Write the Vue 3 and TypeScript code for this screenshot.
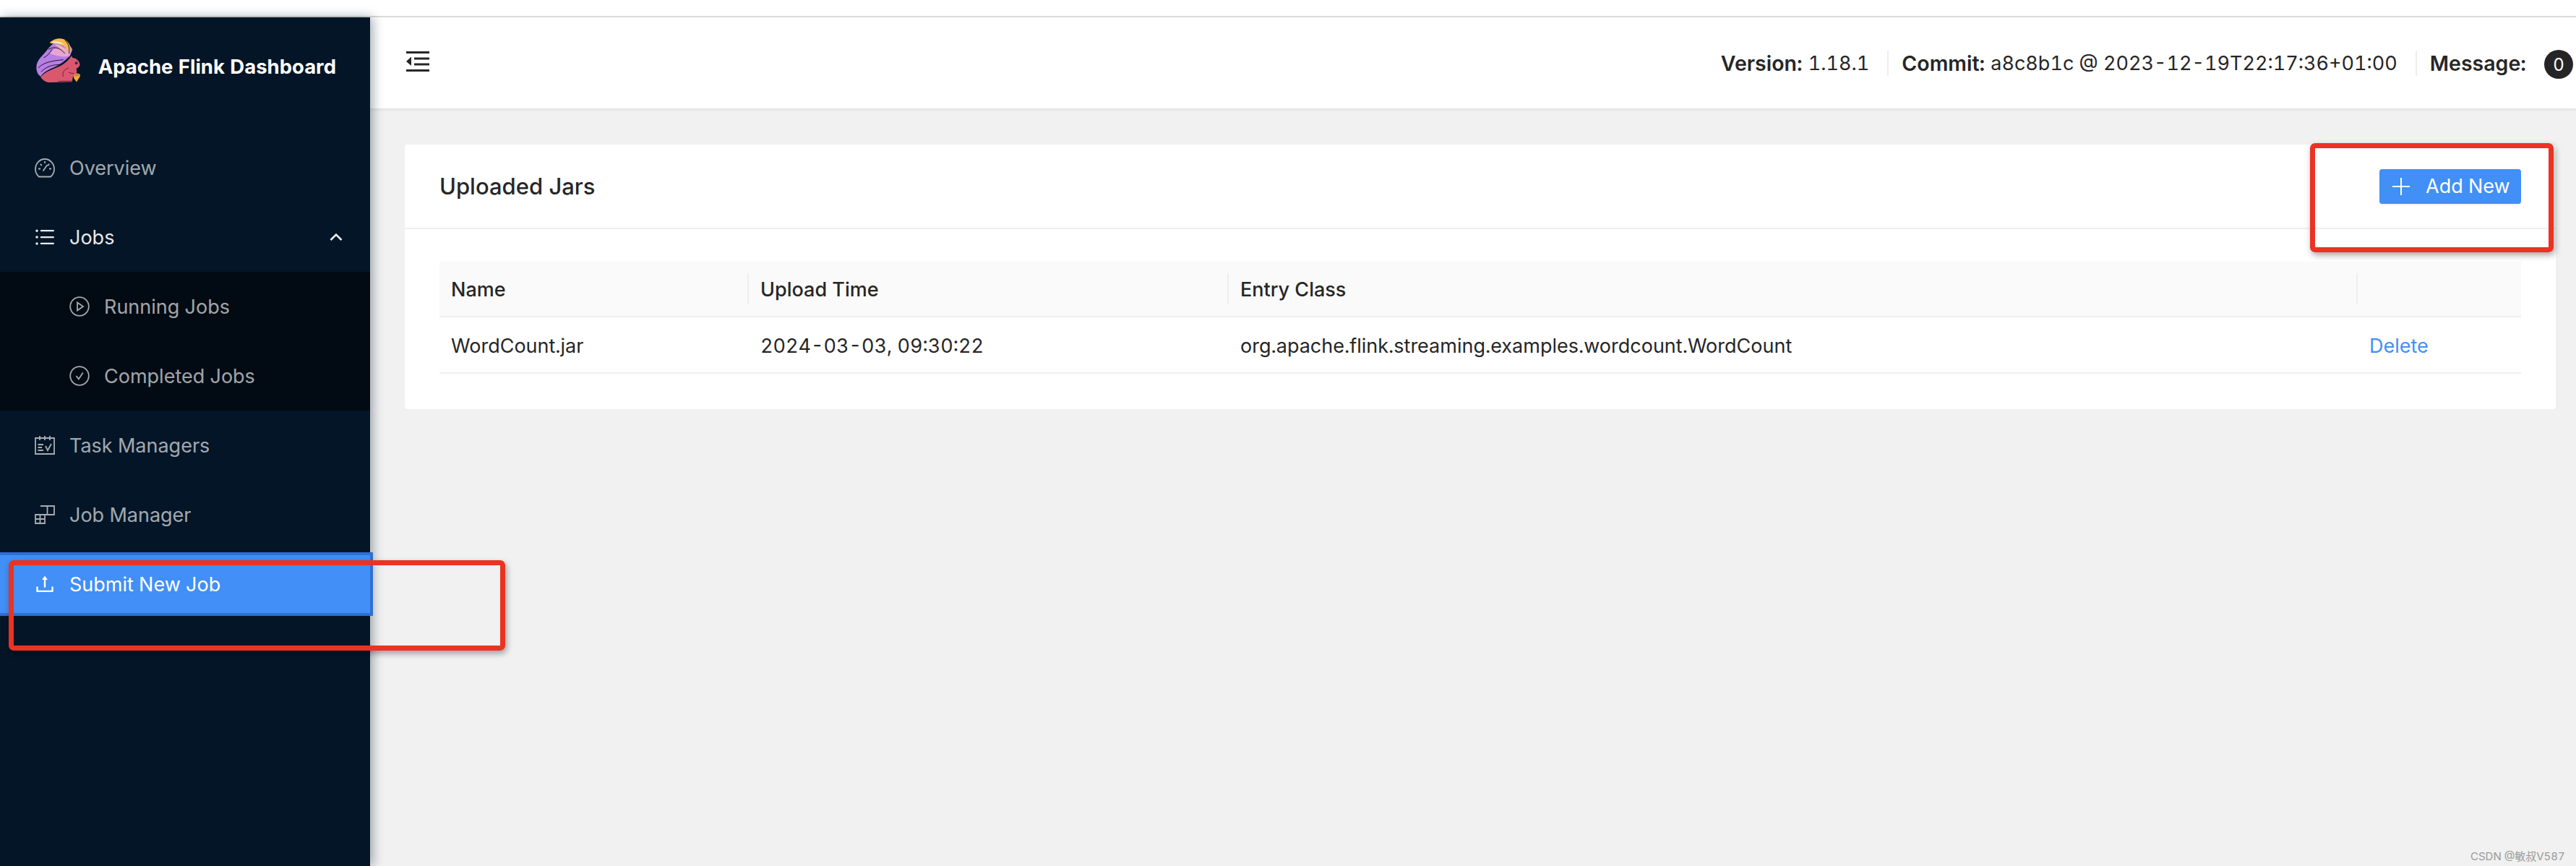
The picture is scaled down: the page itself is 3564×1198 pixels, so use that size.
<script setup lang="ts">
interface JarRow {
  name: string
  time: string
  entry: string
}

const jars: JarRow[] = [
  {
    name: 'WordCount.jar',
    time: '2024-03-03, 09:30:22',
    entry: 'org.apache.flink.streaming.examples.wordcount.WordCount'
  }
]
</script>

<template>
  <div class="page">
    <div class="top-strip"></div>
    <div class="layout">
      <aside class="sider">
        <div class="logo">
          <svg class="squirrel" viewBox="140 150 200 200">
            <path d="M150 280C150 245 180 230 200 200L225 175L290 190L300 205L290 232C270 250 250 270 210 285C190 295 175 305 168 318C155 310 150 295 150 280Z" fill="#b67fe2" />
            <path d="M205 222C225 195 255 190 280 205L296 208L286 232C262 240 235 232 205 222Z" fill="#e7a6cf" />
            <path d="M205 178C215 165 240 155 262 162C280 170 292 185 292 205L285 225C280 200 262 185 240 183C225 180 215 182 205 178Z" fill="#f7b84f" />
            <path d="M212 176C228 168 250 172 268 186C250 180 230 178 212 176Z" fill="#fdeec7" />
            <path d="M225 186C240 182 262 192 272 212C255 200 240 194 225 186Z" fill="#f3c19a" />
            <path d="M158 282C175 262 210 252 262 248M170 298C190 276 220 268 250 268M180 240C195 232 205 222 215 205M268 168C282 178 288 192 286 222M200 205C225 190 250 200 268 222" fill="none" stroke="#26102f" stroke-width="3" />
            <path d="M168 320C185 300 205 292 230 282C260 270 280 255 292 236L296 232L300 240C315 240 328 252 331 268C328 278 322 282 316 284C318 292 318 300 316 304L302 318L298 340L205 342C190 342 175 332 168 320Z" fill="#d95870" />
            <path d="M262 318C254 300 268 286 284 282M284 300C292 304 300 306 308 304M240 338C262 336 280 338 298 336" fill="none" stroke="#5c1b2f" stroke-width="2.500" />
            <circle cx="316" cy="262" r="6" fill="#27393f" />
            <path d="M304 314C306 304 326 300 332 312C332 322 322 328 318 340C312 334 304 326 304 314Z" fill="#f5a833" />
            <path d="M304 314C306 304 326 300 332 312C322 318 312 318 304 314Z" fill="#c98748" />
          </svg>
          <span class="logo-text">Apache Flink Dashboard</span>
        </div>

        <nav class="menu">
          <a class="item">
            <svg class="icon" viewBox="0 0 28 28" fill="none" stroke="currentColor" stroke-width="1.800">
              <path d="M6 26.500C3 24 1 20.500 1 16C1 8.500 6.800 2 14 2C21.200 2 27 8.500 27 16C27 20.500 25 24 22 26.500Z" />
              <path d="M14 5V8M5 15.500H8M20 15.500H23M7.800 9L9.800 11M20.200 9L18.200 11M11.500 18.500L17.500 10" />
            </svg>
            <span>Overview</span>
          </a>

          <a class="item open">
            <svg class="icon" viewBox="64 64 896 896" fill="currentColor">
              <path d="M912 192H328c-4.400 0-8 3.600-8 8v56c0 4.400 3.600 8 8 8h584c4.400 0 8-3.600 8-8v-56c0-4.400-3.600-8-8-8zm0 284H328c-4.400 0-8 3.600-8 8v56c0 4.400 3.600 8 8 8h584c4.400 0 8-3.600 8-8v-56c0-4.400-3.600-8-8-8zm0 284H328c-4.400 0-8 3.600-8 8v56c0 4.400 3.600 8 8 8h584c4.400 0 8-3.600 8-8v-56c0-4.400-3.600-8-8-8zM104 228a56 56 0 1 0 112 0 56 56 0 1 0-112 0zm0 284a56 56 0 1 0 112 0 56 56 0 1 0-112 0zm0 284a56 56 0 1 0 112 0 56 56 0 1 0-112 0z" />
            </svg>
            <span>Jobs</span>
            <svg class="chevron" viewBox="0 0 18 12" fill="none" stroke="currentColor" stroke-width="2.600">
              <path d="M1.500 10L9 2.500L16.500 10" />
            </svg>
          </a>

          <div class="submenu">
            <a class="item sub">
              <svg class="icon" viewBox="0 0 28 28" fill="none" stroke="currentColor" stroke-width="1.800">
                <circle cx="14" cy="14" r="12.800" />
                <path d="M11 8.500V19.500L19 14Z" />
              </svg>
              <span>Running Jobs</span>
            </a>
            <a class="item sub">
              <svg class="icon" viewBox="0 0 28 28" fill="none" stroke="currentColor" stroke-width="1.800">
                <circle cx="14" cy="14" r="12.800" />
                <path d="M9.500 14L12.800 18.500L18.800 9.500" />
              </svg>
              <span>Completed Jobs</span>
            </a>
          </div>

          <a class="item">
            <svg class="icon" viewBox="0 0 28 28" fill="none" stroke="currentColor" stroke-width="1.800">
              <path d="M1 4H27V26H1ZM7 1V7M14 1V7M21 1V7M4.500 13H12M4.500 17H10M4.500 21H12M15 15L18 21L23 12" />
            </svg>
            <span>Task Managers</span>
          </a>

          <a class="item">
            <svg class="icon" viewBox="0 0 28 28" fill="none" stroke="currentColor" stroke-width="1.800">
              <path d="M1 14H14V26H1ZM7.500 14V26M1 20H14M8 2H27V14H14M17.500 2V14" />
            </svg>
            <span>Job Manager</span>
          </a>

          <a class="item active">
            <svg class="icon" viewBox="64 64 896 896" fill="currentColor">
              <path d="M400 317.700h73.900V656c0 4.400 3.600 8 8 8h60c4.400 0 8-3.600 8-8V317.700H624c6.700 0 10.400-7.700 6.300-12.900L518.300 163a8 8 0 0 0-12.600 0l-112 141.700c-4.100 5.300-.4 13 6.300 13zM878 626h-60c-4.400 0-8 3.600-8 8v154H214V634c0-4.400-3.600-8-8-8h-60c-4.400 0-8 3.600-8 8v198c0 17.700 14.300 32 32 32h684c17.700 0 32-14.300 32-32V634c0-4.400-3.600-8-8-8z" />
            </svg>
            <span>Submit New Job</span>
          </a>
        </nav>
      </aside>

      <div class="main">
        <header class="header">
          <svg class="trigger" viewBox="0 0 32 28" fill="#262626">
            <rect x="0" y="0" width="32" height="3" />
            <rect x="11" y="8.500" width="21" height="3" />
            <rect x="11" y="16.500" width="21" height="3" />
            <rect x="0" y="25" width="32" height="3" />
            <path d="M7 7.500V20L0 14Z" />
          </svg>
          <div class="job-info">
            <div class="info"><b>Version:</b> 1.18.1</div>
            <div class="info"><b>Commit:</b> a8c8b1c @ 2023-12-19T22:17:36+01:00</div>
            <div class="info last"><b>Message:</b><span class="badge">0</span></div>
          </div>
        </header>

        <section class="content">
          <div class="card">
            <div class="card-head">
              <span class="card-title">Uploaded Jars</span>
              <button class="add-btn">
                <svg class="plus" viewBox="0 0 24 24" fill="#fff">
                  <rect x="11" y="0" width="2" height="24" />
                  <rect x="0" y="11" width="24" height="2" />
                </svg>
                Add New
              </button>
            </div>
            <div class="card-body">
              <table>
                <thead>
                  <tr>
                    <th class="col-name">Name</th>
                    <th class="col-time">Upload Time</th>
                    <th class="col-entry">Entry Class</th>
                    <th class="col-action"></th>
                  </tr>
                </thead>
                <tbody>
                  <tr v-for="jar in jars" :key="jar.name">
                    <td>{{ jar.name }}</td>
                    <td>{{ jar.time }}</td>
                    <td>{{ jar.entry }}</td>
                    <td><a class="delete">Delete</a></td>
                  </tr>
                </tbody>
              </table>
            </div>
          </div>
        </section>
      </div>
    </div>

    <!-- annotations painted on the screenshot -->
    <div class="mark mark-menu"></div>
    <div class="mark mark-btn"></div>
    <div class="watermark">CSDN @敏叔V587</div>
  </div>
</template>

<style>
html,
body {
  margin: 0;
  background: #fff;
}
</style>

<style scoped>
.page {
  position: relative;
  width: 3564px;
  height: 1198px;
  overflow: hidden;
  display: flex;
  flex-direction: column;
  font-family: Inter, "Noto Sans CJK SC", sans-serif;
  font-size: 27px;
  font-variant-numeric: tabular-nums;
  color: #262626;
  background: #f1f1f1;
}

.top-strip {
  height: 24px;
  flex: none;
  background: #fff;
  border-bottom: 2px solid #dcdcdc;
  box-sizing: border-box;
}

.layout {
  flex: 1;
  display: flex;
  min-height: 0;
}

.sider {
  width: 512px;
  flex: none;
  background: #031527;
  box-shadow: 4px 0 14px rgba(0, 21, 41, 0.35);
  position: relative;
  z-index: 2;
}

.logo {
  height: 160px;
  display: flex;
  align-items: flex-start;
  padding: 26px 0 0 47px;
  box-sizing: border-box;
}

.squirrel {
  width: 66.670px;
  height: 66.670px;
  flex: none;
}

.logo-text {
  margin: 25px 0 0 22px;
  color: #fff;
  font-weight: 700;
  font-size: 27.500px;
  white-space: nowrap;
}

.menu,
.submenu {
  display: flex;
  flex-direction: column;
}

.item {
  height: 88px;
  margin: 4px 0;
  flex: none;
  display: flex;
  align-items: center;
  padding-left: 48px;
  color: rgba(255, 255, 255, 0.65);
  box-sizing: border-box;
}

.item .icon {
  width: 28px;
  height: 28px;
  flex: none;
  margin-right: 20px;
}

.item.open {
  color: rgba(255, 255, 255, 0.92);
}

.chevron {
  width: 18px;
  height: 12px;
  margin-left: auto;
  margin-right: 38px;
}

.submenu {
  background: #020b14;
}

.item.sub {
  padding-left: 96px;
}

.item.active {
  width: 516px;
  color: #fff;
  background: #418ff7;
  border: 4px solid #2f6fd3;
  border-left: none;
  position: relative;
}

.main {
  flex: 1;
  min-width: 0;
  display: flex;
  flex-direction: column;
}

.header {
  height: 126px;
  flex: none;
  display: flex;
  align-items: center;
  justify-content: space-between;
  background: #fff;
  box-shadow: 0 2px 4px rgba(0, 21, 41, 0.08);
  padding-left: 50px;
  padding-right: 4px;
  box-sizing: border-box;
}

.trigger {
  width: 32px;
  height: 28px;
  margin-bottom: 4px;
}

.job-info {
  display: flex;
  align-items: center;
}

.info {
  display: flex;
  align-items: center;
  gap: 0.3em;
  padding: 0 25px 0 18px;
  border-right: 2px solid #eee;
  white-space: nowrap;
}

.info b {
  font-size: 28.500px;
  font-weight: 600;
}

.info.last {
  border-right: none;
  padding-right: 0;
}

.badge {
  width: 40px;
  height: 40px;
  margin-left: 17px;
  margin-top: 4px;
  border-radius: 50%;
  background: #252525;
  color: #fff;
  font-size: 24px;
  display: flex;
  align-items: center;
  justify-content: center;
}

.content {
  flex: 1;
  padding: 50px 28px 0 48px;
}

.card {
  background: #fff;
  border-radius: 4px;
}

.card-head {
  height: 117px;
  display: flex;
  align-items: center;
  justify-content: space-between;
  padding: 0 48px;
  border-bottom: 2px solid #efefef;
  box-sizing: border-box;
}

.card-title {
  font-size: 31px;
  font-weight: 500;
}

.add-btn {
  width: 196px;
  height: 48px;
  display: flex;
  align-items: center;
  padding: 0 0 0 18px;
  border: none;
  border-radius: 4px;
  background: #418ff7;
  color: #fff;
  font: inherit;
  box-shadow: 0 2px 0 rgba(0, 0, 0, 0.05);
  box-sizing: border-box;
}

.plus {
  width: 24px;
  height: 24px;
  margin-right: 22px;
}

.card-body {
  padding: 45px 48px 49px;
}

table {
  width: 100%;
  border-collapse: separate;
  border-spacing: 0;
  table-layout: fixed;
}

th,
td {
  box-sizing: border-box;
  padding: 2px 0 0 16px;
  border-bottom: 2px solid #efefef;
}

th {
  height: 77px;
  text-align: left;
  font-weight: 500;
  background: #fafafa;
  position: relative;
}

th:not(:last-child)::after {
  content: "";
  position: absolute;
  right: 0;
  top: 16px;
  bottom: 16px;
  width: 2px;
  background: #eee;
}

.col-name {
  width: 428px;
}

.col-time {
  width: 664px;
}

.col-entry {
  width: 1562px;
}

td {
  height: 78px;
  white-space: nowrap;
}

.delete {
  color: #418ff7;
}

.mark {
  position: absolute;
  border: 7px solid #ea3323;
  border-radius: 7px;
  box-shadow: 2px 4px 8px rgba(0, 0, 0, 0.35);
  box-sizing: border-box;
  z-index: 5;
}

.mark-menu {
  left: 12px;
  top: 775px;
  width: 687px;
  height: 125px;
}

.mark-btn {
  left: 3196px;
  top: 198px;
  width: 337px;
  height: 151px;
}

.watermark {
  position: absolute;
  left: 3418px;
  top: 1173px;
  font-size: 15px;
  color: #9a9a9a;
  white-space: nowrap;
}
</style>
